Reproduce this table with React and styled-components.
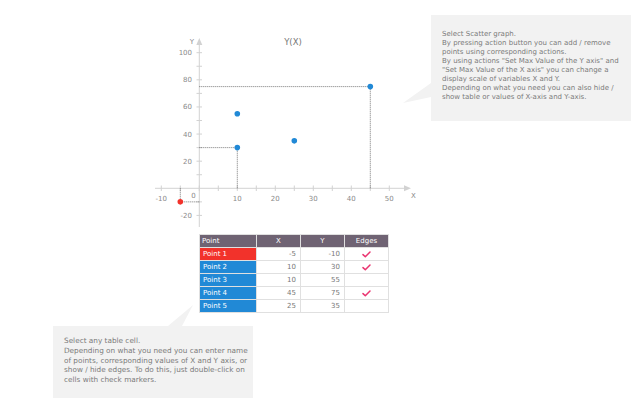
import React from 'react'
import styled, { createGlobalStyle } from 'styled-components'

const GlobalStyle = createGlobalStyle`
    html, body {
        margin: 0;
        padding: 0;
        background: #fff;
    }
    body {
        font-family: "DejaVu Sans", Verdana, sans-serif;
    }
`

const points = [
    { name: 'Point 1', x: -5, y: -10, edges: true, color: '#f2322b' },
    { name: 'Point 2', x: 10, y: 30, edges: true, color: '#2189d6' },
    { name: 'Point 3', x: 10, y: 55, edges: false, color: '#2189d6' },
    { name: 'Point 4', x: 45, y: 75, edges: true, color: '#2189d6' },
    { name: 'Point 5', x: 25, y: 35, edges: false, color: '#2189d6' }
]

// chart scale, in page pixels
const ox = 199.3
const oy = 188.3
const sx = v => ox + 3.8 * v
const sy = v => oy - 1.356 * v

const xTicks = [-10, -5, 0, 5, 10, 15, 20, 25, 30, 35, 40, 45, 50]
const yTicks = [-20, -10, 10, 20, 30, 40, 50, 60, 70, 80, 90, 100]
const xLabels = [-10, 10, 20, 30, 40, 50]
const yLabels = [-20, 20, 40, 60, 80, 100]

const Chart = () => (
    <ChartSvg viewBox="140 0 290 232" width="290" height="232">
        <g stroke="#d2d2d2" strokeWidth="1" fill="none">
            <line x1="155" y1={oy} x2="405" y2={oy} />
            <line x1={ox} y1="227" x2={ox} y2="44" />
            {xTicks.map(t => <line key={t} x1={sx(t)} y1="185.5" x2={sx(t)} y2="191" />)}
            {yTicks.map(t => <line key={t} x1="196.5" y1={sy(t)} x2="202" y2={sy(t)} />)}
        </g>
        <polygon points={`411,${oy} 404,${oy - 3} 404,${oy + 3}`} fill="#d2d2d2" />
        <polygon points={`${ox},38 ${ox - 3},45 ${ox + 3},45`} fill="#d2d2d2" />

        <g fill="#8a8a8a" fontSize="7" fontFamily="DejaVu Sans, sans-serif">
            {xLabels.map(t => <text key={t} x={sx(t)} y="200.5" textAnchor="middle">{t}</text>)}
            <text x="193.5" y="197.5" textAnchor="middle">0</text>
            {yLabels.map(t => <text key={t} x="192" y={sy(t) + 2.5} textAnchor="end">{t}</text>)}
            <text x="192" y="44" textAnchor="middle">Y</text>
            <text x="411" y="197.5">X</text>
        </g>
        <text x="293" y="44.5" textAnchor="middle" fill="#777" fontSize="8.5" fontFamily="DejaVu Sans, sans-serif">Y(X)</text>

        <g stroke="#555" strokeWidth="0.8" strokeDasharray="1 1" fill="none">
            {points.filter(p => p.edges).map(p => (
                <g key={p.name}>
                    <line x1={ox} y1={sy(p.y)} x2={sx(p.x)} y2={sy(p.y)} />
                    <line x1={sx(p.x)} y1={oy} x2={sx(p.x)} y2={sy(p.y)} />
                </g>
            ))}
        </g>
        {points.map(p => <circle key={p.name} cx={sx(p.x)} cy={sy(p.y)} r="2.8" fill={p.color} />)}
    </ChartSvg>
)

const Check = () => (
    <svg width="9" height="7" viewBox="0 0 9 7">
        <path d="M1 3.6 L3.3 5.8 L8 1" stroke="#ea3470" strokeWidth="1.5" fill="none" strokeLinecap="round" strokeLinejoin="round" />
    </svg>
)

export default function App() {
    return (
        <Page>
            <GlobalStyle />
            <TopRow>
                <Chart />
                <Callout $top={15} $left={1} $height={106}>
                    <Note $size={7} $line={9.05} $pad="14.5px 8px 0 11px">
                        Select Scatter graph.<br />
                        By pressing action button you can add / remove<br />
                        points using corresponding actions.<br />
                        By using actions "Set Max Value of the Y axis" and<br />
                        "Set Max Value of the X axis" you can change a<br />
                        display scale of variables X and Y.<br />
                        Depending on what you need you can also hide /<br />
                        show table or values of X-axis and Y-axis.
                    </Note>
                    <RightPointer />
                </Callout>
            </TopRow>

            <Table>
                <thead>
                    <tr>
                        <HeadCell $align="left" $width={56}>Point</HeadCell>
                        <HeadCell $width={43}>X</HeadCell>
                        <HeadCell $width={43}>Y</HeadCell>
                        <HeadCell $width={43}>Edges</HeadCell>
                    </tr>
                </thead>
                <tbody>
                    {points.map(p => (
                        <tr key={p.name}>
                            <NameCell $color={p.color}>{p.name}</NameCell>
                            <NumCell>{p.x}</NumCell>
                            <NumCell>{p.y}</NumCell>
                            <EdgeCell>{p.edges && <Check />}</EdgeCell>
                        </tr>
                    ))}
                </tbody>
            </Table>

            <Callout $top={13} $left={53} $height={72}>
                <Note $size={7.3} $line={9.9} $pad="9.75px 8px 0 11px">
                    Select any table cell.<br />
                    Depending on what you need you can enter name<br />
                    of points, corresponding values of X and Y axis, or<br />
                    show / hide edges. To do this, just double-click on<br />
                    cells with check markers.
                </Note>
                <UpPointer />
            </Callout>
        </Page>
    )
}

const Page = styled.div`
    width: 640px;
    height: 408px;
    overflow: hidden;
    display: flex;
    flex-direction: column;
    align-items: flex-start;
`

const TopRow = styled.div`
    display: flex;
    align-items: flex-start;
    padding-left: 140px;
`

const ChartSvg = styled.svg`
    display: block;
    flex: none;
`

const Callout = styled.div`
    position: relative;
    box-sizing: border-box;
    width: 200px;
    height: ${props => props.$height}px;
    margin-top: ${props => props.$top}px;
    margin-left: ${props => props.$left}px;
    background: #f2f2f2;
`

const Note = styled.p`
    margin: 0;
    padding: ${props => props.$pad};
    font-size: ${props => props.$size}px;
    line-height: ${props => props.$line}px;
    color: #7a7a7a;
    white-space: nowrap;
`

const RightPointer = styled.div`
    position: absolute;
    left: -28px;
    top: 68px;
    width: 28px;
    height: 20px;
    background: #f2f2f2;
    clip-path: polygon(0 100%, 100% 0, 100% 70%);
`

const UpPointer = styled.div`
    position: absolute;
    left: 115px;
    top: -21px;
    width: 25px;
    height: 21px;
    background: #f2f2f2;
    clip-path: polygon(100% 0, 0 100%, 56% 100%);
`

const Table = styled.table`
    margin: 2px 0 0 199px;
    border-collapse: separate;
    border-spacing: 1px;
    background: #e0e0e0;
    font-size: 7px;
    table-layout: fixed;
`

const HeadCell = styled.th`
    width: ${props => props.$width}px;
    height: 12px;
    padding: 0 2px;
    box-sizing: border-box;
    background: #6f6373;
    color: #fff;
    font-weight: normal;
    text-align: ${props => props.$align || 'center'};
    line-height: 12px;
`

const NameCell = styled.td`
    height: 12px;
    padding: 0 3px;
    box-sizing: border-box;
    background: ${props => props.$color};
    color: #fff;
    line-height: 12px;
`

const NumCell = styled.td`
    height: 12px;
    padding: 0 4px;
    box-sizing: border-box;
    background: #fff;
    color: #777;
    text-align: right;
    line-height: 12px;
`

const EdgeCell = styled.td`
    height: 12px;
    padding: 0;
    box-sizing: border-box;
    background: #fff;
    text-align: center;
    line-height: 0;
    vertical-align: middle;
`
